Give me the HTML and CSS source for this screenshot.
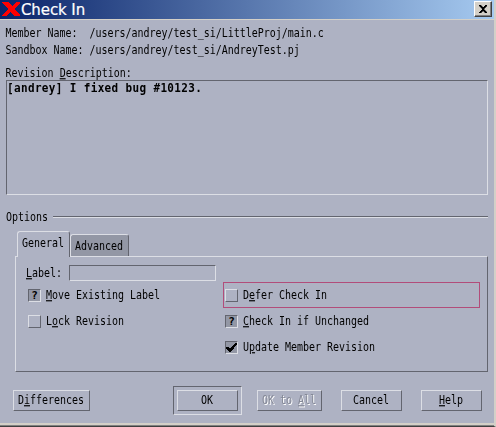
FILE: index.html
```html
<!DOCTYPE html>
<html lang="en">
<head>
<meta charset="utf-8">
<title>Check In</title>
<link rel="stylesheet" href="styles.css">
</head>
<body>
<div class="window">
  <header class="titlebar">
    <svg class="logo" width="18" height="14" viewBox="0 0 18 14" shape-rendering="crispEdges"><path d="M0 0H6L10 4L14 0H18V1L12 7L18 13V14H12L8 10L4 14H0V13L6 7Z" fill="#f00"/></svg>
    <h1>Check In</h1>
    <button class="close" aria-label="Close"><svg width="8" height="8" viewBox="0 0 8 8" shape-rendering="crispEdges"><path d="M0 0H2V1H3V2H5V1H6V0H8V1H7V2H6V3H5V5H6V6H7V7H8V8H6V7H5V6H3V7H2V8H0V7H1V6H2V5H3V3H2V2H1V1H0Z" fill="#000" stroke="#000" stroke-width=".4"/></svg></button>
  </header>
  <main>
    <div class="info"><span class="t">Member Name:&nbsp; /users/andrey/test_si/LittleProj/main.c</span></div>
    <div class="info"><span class="t">Sandbox Name: /users/andrey/test_si/AndreyTest.pj</span></div>
    <div class="info caption"><span class="t">Revision <u>D</u>escription:</span></div>
    <div class="description"><span class="t bold">[andrey] I fixed bug #10123.</span></div>
    <div class="section"><span class="t">Options</span><i class="rule"></i></div>
    <nav class="tabs">
      <div class="tab active"><span class="t">General</span></div>
      <div class="tab"><span class="t">Advanced</span></div>
    </nav>
    <section class="panel">
      <div class="label-row"><span class="t"><u>L</u>abel:</span><div class="field"></div></div>
      <div class="options">
        <div class="column">
          <div class="option"><span class="check on"><b>?</b></span><span class="t"><u>M</u>ove Existing Label</span></div>
          <div class="option"><span class="check"></span><span class="t">L<u>o</u>ck Revision</span></div>
        </div>
        <div class="column">
          <div class="option focus"><span class="check"></span><span class="t">D<u>e</u>fer Check In</span></div>
          <div class="option"><span class="check on"><b>?</b></span><span class="t"><u>C</u>heck In if Unchanged</span></div>
          <div class="option"><span class="check on"><svg width="11" height="11" viewBox="0 0 11 11" shape-rendering="crispEdges"><path d="M0 5H2L4 7L9 1H11V2L5 10H3L0 6Z" fill="#000"/></svg></span><span class="t">U<u>p</u>date Member Revision</span></div>
        </div>
      </div>
    </section>
    <footer>
      <button class="btn diff"><span class="t">D<u>i</u>fferences</span></button>
      <div class="default"><button class="btn"><span class="t">OK</span></button></div>
      <button class="btn disabled"><span class="t">OK to <u>A</u>ll</span></button>
      <button class="btn cancel"><span class="t">Cancel</span></button>
      <button class="btn help"><span class="t"><u>H</u>elp</span></button>
    </footer>
  </main>
</div>
</body>
</html>
```
FILE: styles.css
```css
* { box-sizing: border-box; }
body { margin: 0; background: #aeb2c3; }
.window {
  width: 496px; height: 427px; overflow: hidden;
  display: flex; flex-direction: column;
  background: #aeb2c3;
  border-right: 2px solid #d4d0c8;
  border-bottom: 1px solid #404040;
  --light: #dcdee5; --dark: #63656f;
}
.titlebar {
  height: 20px; flex: none; display: flex; align-items: flex-start;
  padding: 1px 2px 0;
  background: linear-gradient(90deg, #0a246a, #a6caf0);
  border-bottom: 1px solid #d4d0c8;
}
.logo { margin-top: 1px; }
h1 {
  margin: 0 0 0 1px; flex: 1;
  font: 15px/18px "DejaVu Sans", sans-serif;
  letter-spacing: -.1px; color: #fff;
  -webkit-text-stroke: .2px #fff;
}
.close {
  width: 18px; height: 16px; padding: 0 1px 1px 0;
  display: flex; align-items: center; justify-content: center;
  background: #d4d0c8; border: 1px solid; border-color: #fff #404040 #404040 #fff;
  box-shadow: inset -1px -1px #808080;
}
main {
  flex: 1; display: flex; flex-direction: column; padding: 8px 6px 0;
  border-bottom: 2px solid #d4d0c8; margin-bottom: 1px; box-shadow: 0 1px #808080;
}
.t {
  display: block; flex: none; white-space: pre; color: #000;
  font: 10px/12px "DejaVu Sans Mono", monospace;
  letter-spacing: -.02px;
  transform: scaleY(1.17); transform-origin: 0 9px;
}
.t u { text-decoration-thickness: 1px; text-underline-offset: 1px; }
.bold { font-weight: bold; font-size: 11px; letter-spacing: .35px; transform: scaleY(1.08); }
.info { height: 17px; }
.info .t { margin-left: -.4px; }
.caption { margin-top: 6px; height: 12px; }
.description {
  height: 115px; flex: none;
  border: 1px solid; border-color: var(--dark) var(--light) var(--light) var(--dark);
  padding: 2px 0 0;
}
.description, .section, .panel { width: 482px; }
.section { margin-top: 17px; height: 12px; flex: none; display: flex; align-items: flex-start; }
.rule { flex: 1; margin: 4px 0 0 5px; border-top: 1px solid var(--dark); border-bottom: 1px solid var(--light); }
.tabs { height: 25px; margin: 7px 0 0 11px; flex: none; display: flex; align-items: flex-end; position: relative; z-index: 1; }
.tab {
  width: 59px; height: 22px; padding: 6px 0 0 4px;
  background: #9397a5; border: 1px solid; border-color: var(--light) var(--dark) transparent var(--light);
  border-radius: 3px 3px 0 0; border-bottom: 0;
}
.tab.active { width: 53px; height: 26px; margin-bottom: -1px; background: #aeb2c3; }
.panel {
  width: 473px; height: 116px; margin-left: 9px; flex: none; padding: 8px 7px 0 10px;
  border: 1px solid; border-color: var(--light) var(--dark) var(--dark) var(--light);
}
.label-row { display: flex; }
.field { width: 147px; height: 16px; margin-left: 7px; border: 1px solid; border-color: var(--dark) var(--light) var(--light) var(--dark); }
.label-row .t { margin-top: 3px; }
.options { display: grid; grid-template-columns: 197px 257px; margin-top: 1px; }
.option { height: 26px; padding-left: 2px; display: flex; align-items: center; border: 0 solid #b24d7a; }
.option.focus { border-width: 1px; padding-left: 1px; }
.check { width: 13px; height: 13px; flex: none; display: flex; align-items: center; justify-content: center; border: 1px solid; border-color: var(--light) var(--dark) var(--dark) var(--light); }
.check.on { background: #9397a5; border-color: var(--dark) var(--light) var(--light) var(--dark); }
.check b { font: bold 11px/11px "DejaVu Sans Mono", monospace; }
.option .t { margin: 1px 0 0 5px; }
footer { display: flex; align-items: center; height: 29px; margin: 14px 0 0 7px; flex: none; }
.btn {
  width: 61px; height: 21px; padding: 0; flex: none;
  display: flex; align-items: center; justify-content: center;
  background: transparent; border: 1px solid; border-color: var(--light) var(--dark) var(--dark) var(--light);
}
.btn .t { margin-left: -1px; }
.diff { width: 77px; }
.default { width: 69px; height: 29px; margin-left: 83px; padding: 3px; border: 1px solid; border-color: var(--dark) var(--light) var(--light) var(--dark); }
.disabled { width: 65px; margin-left: 15px; }
.disabled .t { color: #858997; text-shadow: 1px 1px #fff; }
.cancel, .help { margin-left: 19px; }
```
